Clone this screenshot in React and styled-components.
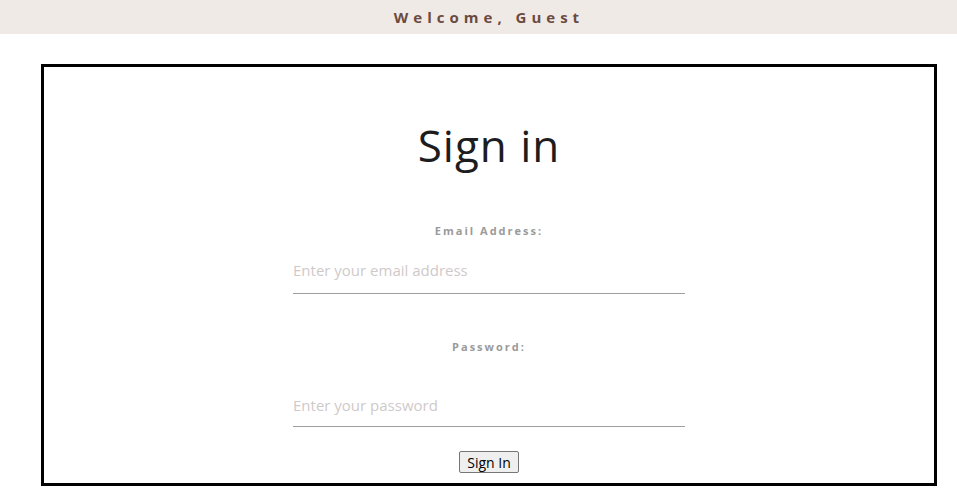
import React from 'react';
import styled, { createGlobalStyle } from 'styled-components';

const GlobalStyle = createGlobalStyle`
  body {
    margin: 0;
    font-family: "Open Sans", "Noto Sans", sans-serif;
    background: #fff;
  }
`;

const TopBar = styled.header`
  height: 34px;
  padding-left: 21px;
  background: #f0eae7;
  display: flex;
  align-items: center;
  justify-content: center;
`;

const Welcome = styled.span`
  font-size: 15px;
  font-weight: 700;
  letter-spacing: 5px;
  color: #6b4a40;
`;

const Card = styled.main`
  margin: 30px 20px 0 41px;
  height: 422px;
  box-sizing: border-box;
  border: 3px solid #000;
  display: flex;
  flex-direction: column;
  align-items: center;
`;

const Title = styled.h1`
  margin: 48px 0 0;
  font-size: 44px;
  font-weight: 400;
  letter-spacing: 1px;
  color: #1d1d1f;
  line-height: 60px;
`;

const Form = styled.form`
  width: 392px;
  display: flex;
  flex-direction: column;
  align-items: center;
`;

const Label = styled.label`
  font-size: 11px;
  font-weight: 700;
  letter-spacing: 2px;
  color: #9a9a9a;
  margin-top: ${({ $top }) => $top}px;
`;

const Input = styled.input`
  width: 100%;
  box-sizing: border-box;
  border: none;
  border-bottom: 1px solid #9e9e9e;
  outline: none;
  padding: 0 0 ${({ $pad }) => $pad}px;
  margin-top: ${({ $top }) => $top}px;
  font-family: inherit;
  font-size: 15px;
  line-height: 22px;
  color: #333;
  &::placeholder {
    color: #cfcaca;
  }
`;

const Button = styled.button`
  margin-top: 24px;
  height: 22px;
  padding: 0 7px;
  font-family: "Open Sans", "Noto Sans", sans-serif;
  font-size: 14px;
  color: #000;
  background: #efefef;
  border: 1px solid #767676;
  border-radius: 2px;
`;

export default function App() {
  return (
    <>
      <GlobalStyle />
      <TopBar>
        <Welcome>Welcome, Guest</Welcome>
      </TopBar>
      <Card>
        <Title>Sign in</Title>
        <Form onSubmit={(e) => e.preventDefault()}>
          <Label htmlFor="email" $top={48}>Email Address:</Label>
          <Input id="email" type="email" placeholder="Enter your email address" $top={21} $pad={12} />
          <Label htmlFor="password" $top={45}>Password:</Label>
          <Input id="password" type="password" placeholder="Enter your password" $top={40} $pad={10} />
          <Button type="submit">Sign In</Button>
        </Form>
      </Card>
    </>
  );
}
